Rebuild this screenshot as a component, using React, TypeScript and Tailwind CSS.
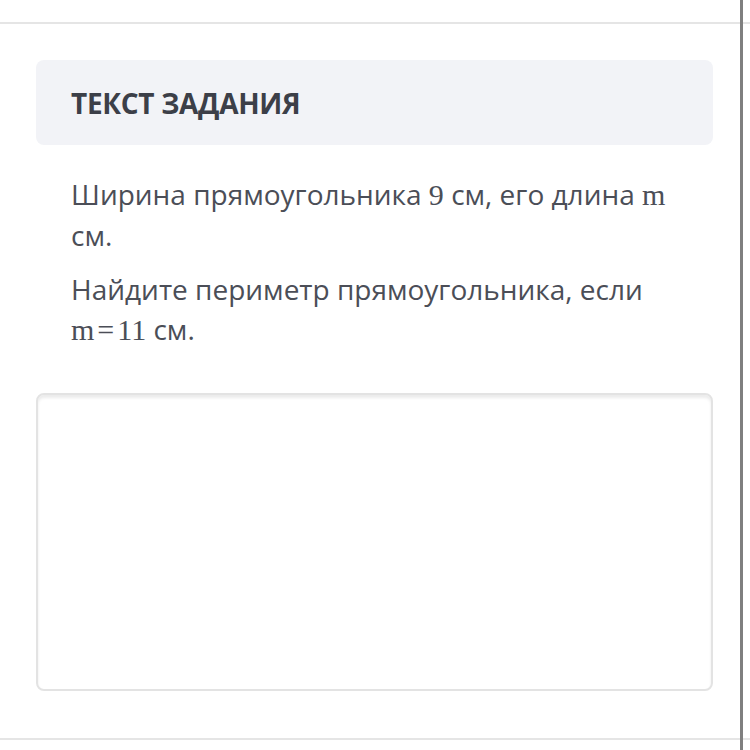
export default function App() {
    return (
        <div className="relative w-[750px] h-[750px] overflow-hidden bg-white font-['Open_Sans',sans-serif]">
            {/* верхняя граница */}
            <div className="h-[24px] border-b-2 border-[#e5e5e5]"></div>

            <div className="pl-[36px] pr-[37px]">
                {/* заголовок */}
                <div className="mt-[36px] h-[85px] rounded-lg bg-[#f2f3f7] px-[35px] flex items-center">
                    <h2 className="text-[28px] font-bold text-[#3c3f48] tracking-[-0.3px]">ТЕКСТ ЗАДАНИЯ</h2>
                </div>

                {/* текст задания */}
                <div className="mt-[29px] px-[35px] text-[28px] leading-[40px] text-[#4b4e57]">
                    <p>
                        Ширина прямоугольника <span className="font-['Liberation_Serif',serif] text-[30px]">9</span> см, его длина{" "}
                        <span className="font-['Liberation_Serif',serif] text-[30px]">m</span> см.
                    </p>
                    <p className="mt-[14px]">
                        Найдите периметр прямоугольника, если{" "}
                        <span className="font-['Liberation_Serif',serif] text-[30px] whitespace-nowrap">
                            m<span className="mx-[3px]">=</span>11
                        </span>{" "}
                        см.
                    </p>
                </div>

                {/* поле ответа */}
                <div className="mt-[43px] h-[298px] rounded-lg border-2 border-[#e3e3e3] shadow-[inset_0_3px_3px_rgba(0,0,0,0.08)]"></div>
            </div>

            {/* нижняя граница */}
            <div className="absolute left-0 right-0 top-[738px] h-[2px] bg-[#e5e5e5]"></div>

            {/* полоса прокрутки */}
            <div className="absolute top-0 bottom-0 left-[740px] w-[3px] bg-[#7f7f7f]"></div>
        </div>
    );
}
